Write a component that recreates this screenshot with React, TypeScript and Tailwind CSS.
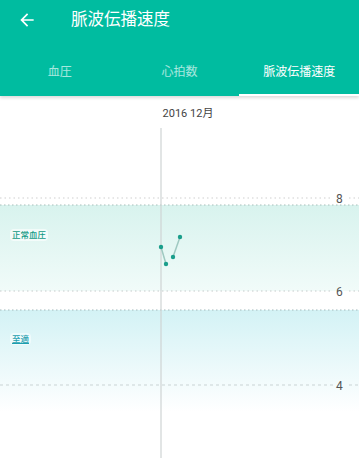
import { useState } from "react";

const tabs = ["血圧", "心拍数", "脈波伝播速度"];

// チャートのデータ点 (x, y) — チャート領域の座標
const points = [
  { x: 161, y: 151 },
  { x: 166, y: 168 },
  { x: 173, y: 161 },
  { x: 180, y: 141 },
];

// 軸ラベル (値, y座標)
const ticks = [
  { v: "8", y: 94 },
  { v: "6", y: 187 },
  { v: "4", y: 281 },
];

const Chart = () => {
  return (
    <div className="relative flex-1 bg-white overflow-hidden">
      <svg
        width="359"
        height="362"
        className="absolute left-0 top-0"
        viewBox="0 0 359 362"
      >
        <defs>
          <linearGradient id="band1" x1="0" y1="0" x2="0" y2="1">
            <stop offset="0%" stopColor="#d8f3ee" />
            <stop offset="100%" stopColor="#f1fbf9" />
          </linearGradient>
          <linearGradient id="band2" x1="0" y1="0" x2="0" y2="1">
            <stop offset="0%" stopColor="#d3f2f5" />
            <stop offset="100%" stopColor="#ffffff" />
          </linearGradient>
        </defs>

        {/* 正常血圧 / 至適 の帯 */}
        <rect x="0" y="109" width="359" height="86" fill="url(#band1)" />
        <rect x="0" y="214" width="359" height="102" fill="url(#band2)" />

        {/* 目盛り線 */}
        <line x1="0" y1="102" x2="333" y2="102" stroke="#cfcfcf" strokeWidth="1.2" strokeDasharray="1.5 3" />
        <line x1="349" y1="102" x2="359" y2="102" stroke="#cfcfcf" strokeWidth="1.2" strokeDasharray="1.5 3" />
        <line x1="0" y1="109" x2="359" y2="109" stroke="#a9bfbc" strokeWidth="1.2" strokeDasharray="1.5 2.5" />
        <line x1="0" y1="195" x2="333" y2="195" stroke="#c6cccb" strokeWidth="1.2" strokeDasharray="1.5 3" />
        <line x1="349" y1="195" x2="359" y2="195" stroke="#c6cccb" strokeWidth="1.2" strokeDasharray="1.5 3" />
        <line x1="0" y1="214" x2="359" y2="214" stroke="#a3babd" strokeWidth="1.2" strokeDasharray="1.5 2.5" />
        <line x1="0" y1="289" x2="333" y2="289" stroke="#c9d3d4" strokeWidth="1" strokeDasharray="3 3" />
        <line x1="349" y1="289" x2="359" y2="289" stroke="#c9d3d4" strokeWidth="1" strokeDasharray="3 3" />

        {/* 縦線 */}
        <line x1="161" y1="32" x2="161" y2="362" stroke="#cfd4d4" strokeWidth="1.2" />

        {/* 折れ線 */}
        <line x1="161" y1="151" x2="166" y2="168" stroke="#9fc9c1" strokeWidth="1.5" />
        <line x1="173" y1="161" x2="180" y2="141" stroke="#9fc9c1" strokeWidth="1.5" />
        {points.map((p, i) => (
          <circle key={i} cx={p.x} cy={p.y} r="2.2" fill="#1a9e8b" />
        ))}
      </svg>

      <div className="relative pt-[10px] pl-[17px] text-center text-[11px] text-[#444]">
        2016 12月
      </div>

      {ticks.map((t) => (
        <span
          key={t.v}
          className="absolute left-[336px] text-[12px] text-[#555]"
          style={{ top: t.y }}
        >
          {t.v}
        </span>
      ))}

      <span className="absolute left-[10px] top-[133px] px-[2px] rounded-sm bg-white/60 text-[8.5px] leading-[12px] font-medium text-[#139a86]">
        正常血圧
      </span>
      <span className="absolute left-[10px] top-[237px] px-[2px] rounded-sm bg-white/50 text-[8.5px] leading-[12px] font-medium text-[#1d9fb0] underline">
        至適
      </span>
    </div>
  );
};

export default function App() {
  const [active, setActive] = useState(2);

  return (
    <div className="w-[359px] h-[458px] flex flex-col bg-white font-['Roboto','Noto_Sans_CJK_JP',sans-serif]">
      <div className="bg-[#00bca0] shadow-[0_2px_3px_rgba(0,0,0,0.14)] z-10">
        <div className="h-[40px] flex items-center">
          <button className="w-[56px] h-full flex items-center pl-[17px]">
            <svg width="20" height="20" viewBox="0 0 24 24" fill="white">
              <path d="M20 11H7.83l5.59-5.59L12 4l-8 8 8 8 1.41-1.41L7.83 13H20v-2z" />
            </svg>
          </button>
          <h1 className="ml-[15px] text-[16.5px] text-white">脈波伝播速度</h1>
        </div>
        <div className="h-[56px] grid grid-cols-3">
          {tabs.map((t, i) => (
            <button
              key={t}
              onClick={() => setActive(i)}
              className={`relative flex items-center justify-center pt-[8px] text-[12px] ${
                i === active ? "text-white" : "text-white/65"
              }`}
            >
              {t}
              {i === active && (
                <span className="absolute left-0 right-0 bottom-0 h-[2px] bg-white" />
              )}
            </button>
          ))}
        </div>
      </div>
      <Chart />
    </div>
  );
}
